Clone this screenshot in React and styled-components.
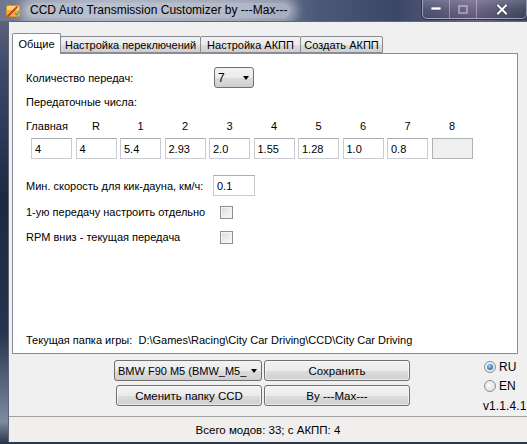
import React from 'react';
import styled, { createGlobalStyle } from 'styled-components';

const GlobalStyle = createGlobalStyle`
  html, body {
    margin: 0;
    padding: 0;
    background: #1c2438;
  }
  * {
    box-sizing: border-box;
  }
`;

const Window = styled.div`
  width: 527px;
  height: 444px;
  display: flex;
  flex-direction: column;
  overflow: hidden;
  font-family: 'Liberation Sans', Arial, sans-serif;
  font-size: 11px;
  color: #000;
  background: linear-gradient(
    180deg,
    #6f6a82 0%,
    #3d4a6a 15%,
    #1d2842 45%,
    #27344f 75%,
    #7c8aa2 95%,
    #2a3246 100%
  );
`;

const TitleBar = styled.div`
  height: 21px;
  display: flex;
  align-items: flex-start;
  padding-left: 5px;
  background: linear-gradient(
    90deg,
    #6d7890 0%,
    #8e98aa 20%,
    #7a8499 45%,
    #4c5a78 60%,
    #3a4767 75%,
    #6b6184 90%,
    #3d4660 100%
  );
`;

const AppIcon = styled.svg`
  width: 16px;
  height: 16px;
  margin-top: 3px;
  flex-shrink: 0;
`;

const Title = styled.span`
  margin-left: 5px;
  margin-top: 3px;
  font-size: 12px;
  line-height: 15px;
  color: #000;
  padding: 0 4px;
  background: rgba(225, 230, 236, 0.55);
  border-radius: 8px;
  box-shadow: 0 0 10px 6px rgba(225, 230, 236, 0.5);
`;

const CaptionGroup = styled.div`
  margin-left: auto;
  display: flex;
  height: 19px;
  border: 1px solid rgba(230, 235, 245, 0.55);
  border-top: none;
  border-radius: 0 0 5px 5px;
  box-shadow: 0 0 0 1px rgba(20, 25, 40, 0.6);
  overflow: hidden;
`;

const CaptionButton = styled.div`
  width: ${(p) => p.$w}px;
  height: 100%;
  display: flex;
  align-items: center;
  justify-content: center;
  border-left: ${(p) => (p.$first ? 'none' : '1px solid rgba(230, 235, 245, 0.4)')};
  background: linear-gradient(180deg, rgba(255, 255, 255, 0.18), rgba(255, 255, 255, 0.04) 50%, rgba(0, 0, 0, 0.08));
`;

const Main = styled.div`
  flex: 1;
  display: flex;
  padding: 0 0 2px 8px;
`;

const Client = styled.div`
  flex: 1;
  display: flex;
  flex-direction: column;
  background: #f0f0f0;
  border: 1px solid #5e6676;
  border-right: none;
  border-bottom: none;
`;

const TabArea = styled.div`
  padding: 11px 9px 0 3px;
`;

const TabRow = styled.div`
  display: flex;
  align-items: flex-end;
  height: 20px;
  position: relative;
  z-index: 1;
`;

const Tab = styled.div`
  width: ${(p) => p.$w}px;
  height: ${(p) => (p.$active ? 21 : 17)}px;
  margin-bottom: ${(p) => (p.$active ? -1 : 0)}px;
  margin-left: ${(p) => (p.$first ? 0 : -1)}px;
  padding-top: ${(p) => (p.$active ? 3 : 1)}px;
  text-align: center;
  white-space: nowrap;
  line-height: 14px;
  border: 1px solid #898c95;
  border-bottom: ${(p) => (p.$active ? 'none' : '1px solid #898c95')};
  border-radius: 2px 2px 0 0;
  background: ${(p) =>
    p.$active ? '#fff' : 'linear-gradient(180deg, #f2f2f2 0%, #ebebeb 50%, #dddddd 51%, #cfcfcf 100%)'};
  position: relative;
  z-index: ${(p) => (p.$active ? 2 : 1)};
`;

const Panel = styled.div`
  height: 301px;
  border: 1px solid #898c95;
  background: #fff;
  display: flex;
  flex-direction: column;
  padding: 13px 0 6px 13px;
`;

const Row = styled.div`
  display: flex;
  align-items: center;
  height: ${(p) => p.$h || 14}px;
  margin-top: ${(p) => p.$mt || 0}px;
`;

const Label = styled.span`
  width: ${(p) => (p.$w ? `${p.$w}px` : 'auto')};
  flex-shrink: 0;
  line-height: 14px;
  white-space: nowrap;
`;

const Spacer = styled.div`
  flex: 1;
`;

const Combo = styled.div`
  width: ${(p) => p.$w}px;
  height: 21px;
  display: flex;
  align-items: center;
  padding: 0 4px 0 3px;
  border: 1px solid #707070;
  border-radius: 3px;
  background: linear-gradient(180deg, #f2f2f2 0%, #ebebeb 50%, #dddddd 51%, #cfcfcf 100%);
  white-space: nowrap;
  overflow: hidden;
  font-size: ${(p) => p.$fs || 11}px;
`;

const ComboText = styled.span`
  flex: 1;
  overflow: hidden;
`;

const Arrow = styled.span`
  width: 0;
  height: 0;
  margin-left: 2px;
  border-left: 3.5px solid transparent;
  border-right: 3.5px solid transparent;
  border-top: 4px solid #000;
  flex-shrink: 0;
`;

const GearGrid = styled.div`
  display: grid;
  grid-template-columns: repeat(10, 41px);
  column-gap: 3.5px;
  margin-left: 5px;
  margin-top: ${(p) => p.$mt}px;
`;

const GearLabel = styled.span`
  text-align: ${(p) => (p.$first ? 'left' : 'center')};
  margin-left: ${(p) => (p.$first ? -5 : 0)}px;
  line-height: 14px;
  white-space: nowrap;
`;

const TextBox = styled.div`
  width: ${(p) => p.$w || 41}px;
  height: 21px;
  padding: 3px 0 0 3px;
  line-height: 14px;
  border: 1px solid #c9ccd2;
  border-top-color: #abadb3;
  background: ${(p) => (p.$disabled ? '#f0f0f0' : '#fff')};
  ${(p) => p.$disabled && 'border-color: #adb2b5;'}
`;

const CheckBox = styled.span`
  width: 13px;
  height: 13px;
  border: 1px solid #8e8f8f;
  background: linear-gradient(135deg, #dcdcdc 0%, #f4f4f4 80%, #fbfbfb 100%);
  box-shadow: inset 0 0 0 1px #f4f4f4;
  flex-shrink: 0;
`;

const BottomArea = styled.div`
  height: 62px;
  display: flex;
`;

const ButtonGrid = styled.div`
  margin-left: 105px;
  margin-top: 6px;
  display: grid;
  grid-template-columns: 148px 146px;
  grid-template-rows: 21px 21px;
  column-gap: 2px;
  row-gap: 4px;
`;

const Button = styled.div`
  width: 146px;
  height: 21px;
  justify-self: end;
  display: flex;
  align-items: center;
  justify-content: center;
  border: 1px solid #707070;
  border-radius: 3px;
  background: linear-gradient(180deg, #f2f2f2 0%, #ebebeb 50%, #dddddd 51%, #cfcfcf 100%);
  font-size: 11.5px;
  box-shadow: inset 0 0 0 1px rgba(255, 255, 255, 0.6);
`;

const LangColumn = styled.div`
  margin-left: 73px;
  padding-top: 3px;
  display: flex;
  flex-direction: column;
`;

const LangRow = styled.div`
  height: 20px;
  display: flex;
  align-items: center;
  gap: 3px;
  padding-left: 1px;
  font-size: 12px;
`;

const Radio = styled.span`
  width: 12px;
  height: 12px;
  border-radius: 50%;
  border: 1px solid #8e8f8f;
  background: radial-gradient(circle at 40% 40%, #fbfbfb 0%, #e6e6e6 60%, #d0d0d0 100%);
  display: flex;
  align-items: center;
  justify-content: center;
  flex-shrink: 0;
  &::after {
    content: '';
    display: ${(p) => (p.$checked ? 'block' : 'none')};
    width: 6px;
    height: 6px;
    border-radius: 50%;
    background: radial-gradient(circle at 40% 35%, #9fd3f6 0%, #3a86cd 55%, #174f8f 100%);
  }
`;

const Version = styled.span`
  font-size: 12px;
  line-height: 20px;
  letter-spacing: 0.1px;
`;

const StatusBar = styled.div`
  height: 26px;
  border-top: 1px solid #a0a0a0;
  display: flex;
  align-items: center;
  justify-content: center;
  font-size: 11.5px;
  background: #f0efee;
`;

const gears = [
  { name: 'Главная', value: '4' },
  { name: 'R', value: '4' },
  { name: '1', value: '5.4' },
  { name: '2', value: '2.93' },
  { name: '3', value: '2.0' },
  { name: '4', value: '1.55' },
  { name: '5', value: '1.28' },
  { name: '6', value: '1.0' },
  { name: '7', value: '0.8' },
  { name: '8', value: '', disabled: true },
];

const tabs = [
  { title: 'Общие', w: 49, active: true },
  { title: 'Настройка переключений', w: 141 },
  { title: 'Настройка АКПП', w: 101 },
  { title: 'Создать АКПП', w: 83 },
];

const App = () => {
  return (
    <>
      <GlobalStyle />
      <Window>
        <TitleBar>
          <AppIcon viewBox="0 0 16 16">
            <rect x="1" y="2" width="14" height="12" rx="2" fill="#e9b43c" stroke="#a4701a" strokeWidth="0.8" />
            <rect x="2" y="3" width="12" height="4" rx="1" fill="#f6d877" />
            <path d="M3 13 L12 4" stroke="#d2302a" strokeWidth="1.8" strokeLinecap="round" />
            <path d="M10 10 L12 12 L14 8" stroke="#3b9a3a" strokeWidth="1.3" fill="none" />
          </AppIcon>
          <Title>CCD Auto Transmission Customizer by ---Max---</Title>
          <CaptionGroup>
            <CaptionButton $w={26} $first>
              <svg width="10" height="4" viewBox="0 0 10 4">
                <rect x="0" y="0" width="10" height="3" fill="#fff" stroke="#39404f" strokeWidth="0.6" />
              </svg>
            </CaptionButton>
            <CaptionButton $w={27}>
              <svg width="10" height="9" viewBox="0 0 10 9">
                <rect x="1" y="1" width="8" height="7" fill="none" stroke="rgba(255,255,255,0.45)" strokeWidth="1.6" />
              </svg>
            </CaptionButton>
            <CaptionButton $w={50}>
              <svg width="12" height="11" viewBox="0 0 12 11">
                <path d="M2 1.5 L10 9.5 M10 1.5 L2 9.5" stroke="#39404f" strokeWidth="3.4" strokeLinecap="square" />
                <path d="M2 1.5 L10 9.5 M10 1.5 L2 9.5" stroke="#fff" strokeWidth="2" strokeLinecap="square" />
              </svg>
            </CaptionButton>
          </CaptionGroup>
        </TitleBar>
        <Main>
          <Client>
            <TabArea>
              <TabRow>
                {tabs.map((t, i) => (
                  <Tab key={t.title} $w={t.w} $active={t.active} $first={i === 0}>
                    {t.title}
                  </Tab>
                ))}
              </TabRow>
              <Panel>
                <Row $h={21}>
                  <Label $w={188}>Количество передач:</Label>
                  <Combo $w={40} $fs={12}>
                    <ComboText>7</ComboText>
                    <Arrow />
                  </Combo>
                </Row>
                <Row $mt={7}>
                  <Label>Передаточные числа:</Label>
                </Row>
                <GearGrid $mt={10}>
                  {gears.map((g, i) => (
                    <GearLabel key={g.name} $first={i === 0}>
                      {g.name}
                    </GearLabel>
                  ))}
                </GearGrid>
                <GearGrid $mt={5}>
                  {gears.map((g) => (
                    <TextBox key={g.name} $disabled={g.disabled}>
                      {g.value}
                    </TextBox>
                  ))}
                </GearGrid>
                <Row $h={21} $mt={16}>
                  <Label $w={187}>Мин. скорость для кик-дауна, км/ч:</Label>
                  <TextBox $w={42}>0.1</TextBox>
                </Row>
                <Row $h={20} $mt={6}>
                  <Label $w={194}>1-ую передачу настроить отдельно</Label>
                  <CheckBox />
                </Row>
                <Row $h={20} $mt={5}>
                  <Label $w={194}>RPM вниз - текущая передача</Label>
                  <CheckBox />
                </Row>
                <Spacer />
                <Row>
                  <Label>Текущая папка игры:&nbsp;&nbsp;D:\Games\Racing\City Car Driving\CCD\City Car Driving</Label>
                </Row>
              </Panel>
            </TabArea>
            <BottomArea>
              <ButtonGrid>
                <Combo $w={148} $fs={11}>
                  <ComboText>BMW F90 M5 (BMW_M5_</ComboText>
                  <Arrow />
                </Combo>
                <Button>Сохранить</Button>
                <Button>Сменить папку CCD</Button>
                <Button>By ---Max---</Button>
              </ButtonGrid>
              <LangColumn>
                <LangRow>
                  <Radio $checked />
                  RU
                </LangRow>
                <LangRow>
                  <Radio />
                  EN
                </LangRow>
                <Version>v1.1.4.1</Version>
              </LangColumn>
            </BottomArea>
            <StatusBar>Всего модов: 33; с АКПП: 4</StatusBar>
          </Client>
        </Main>
      </Window>
    </>
  );
};

export default App;
